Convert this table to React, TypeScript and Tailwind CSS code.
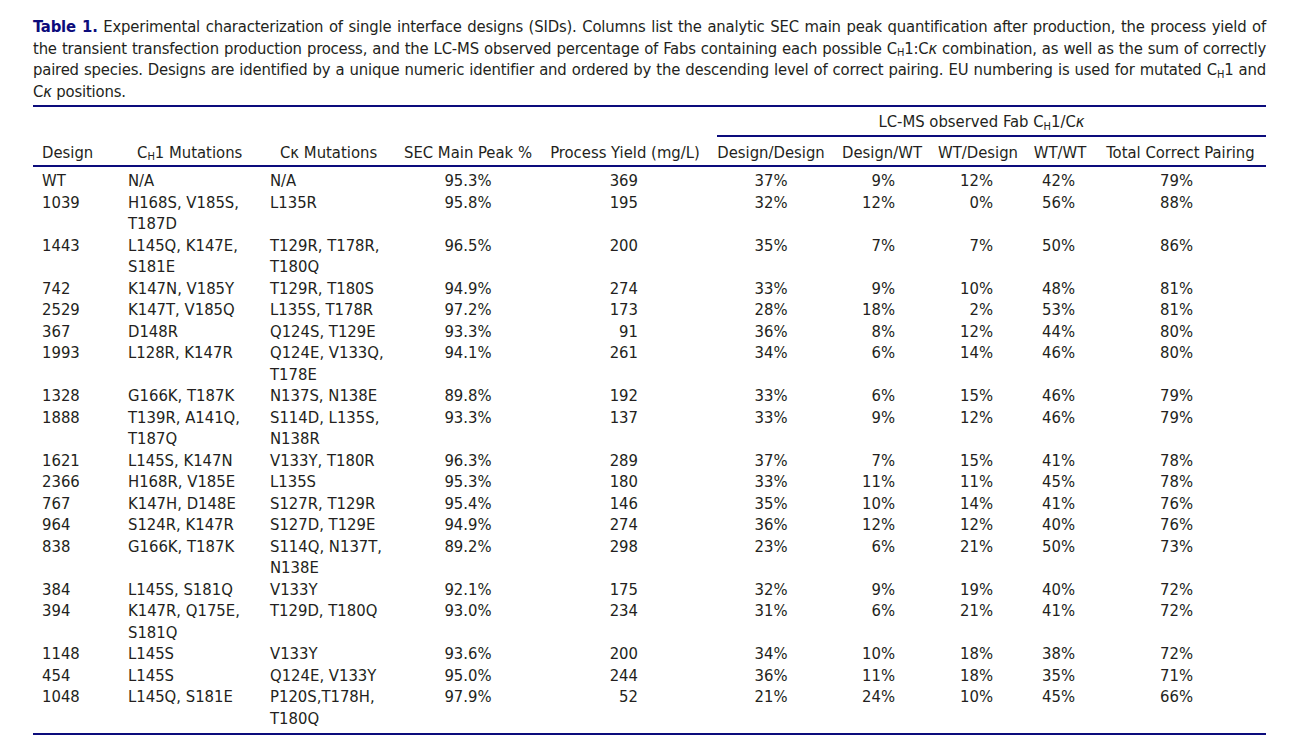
import React from "react";

type Row = {
  d: string;
  ch: string[];
  ck: string[];
  sec: string;
  y: string;
  dd: string;
  dw: string;
  wd: string;
  ww: string;
  t: string;
};

const rows: Row[] = [
  { d: "WT", ch: ["N/A"], ck: ["N/A"], sec: "95.3%", y: "369", dd: "37%", dw: "9%", wd: "12%", ww: "42%", t: "79%" },
  { d: "1039", ch: ["H168S, V185S,", "T187D"], ck: ["L135R"], sec: "95.8%", y: "195", dd: "32%", dw: "12%", wd: "0%", ww: "56%", t: "88%" },
  { d: "1443", ch: ["L145Q, K147E,", "S181E"], ck: ["T129R, T178R,", "T180Q"], sec: "96.5%", y: "200", dd: "35%", dw: "7%", wd: "7%", ww: "50%", t: "86%" },
  { d: "742", ch: ["K147N, V185Y"], ck: ["T129R, T180S"], sec: "94.9%", y: "274", dd: "33%", dw: "9%", wd: "10%", ww: "48%", t: "81%" },
  { d: "2529", ch: ["K147T, V185Q"], ck: ["L135S, T178R"], sec: "97.2%", y: "173", dd: "28%", dw: "18%", wd: "2%", ww: "53%", t: "81%" },
  { d: "367", ch: ["D148R"], ck: ["Q124S, T129E"], sec: "93.3%", y: "91", dd: "36%", dw: "8%", wd: "12%", ww: "44%", t: "80%" },
  { d: "1993", ch: ["L128R, K147R"], ck: ["Q124E, V133Q,", "T178E"], sec: "94.1%", y: "261", dd: "34%", dw: "6%", wd: "14%", ww: "46%", t: "80%" },
  { d: "1328", ch: ["G166K, T187K"], ck: ["N137S, N138E"], sec: "89.8%", y: "192", dd: "33%", dw: "6%", wd: "15%", ww: "46%", t: "79%" },
  { d: "1888", ch: ["T139R, A141Q,", "T187Q"], ck: ["S114D, L135S,", "N138R"], sec: "93.3%", y: "137", dd: "33%", dw: "9%", wd: "12%", ww: "46%", t: "79%" },
  { d: "1621", ch: ["L145S, K147N"], ck: ["V133Y, T180R"], sec: "96.3%", y: "289", dd: "37%", dw: "7%", wd: "15%", ww: "41%", t: "78%" },
  { d: "2366", ch: ["H168R, V185E"], ck: ["L135S"], sec: "95.3%", y: "180", dd: "33%", dw: "11%", wd: "11%", ww: "45%", t: "78%" },
  { d: "767", ch: ["K147H, D148E"], ck: ["S127R, T129R"], sec: "95.4%", y: "146", dd: "35%", dw: "10%", wd: "14%", ww: "41%", t: "76%" },
  { d: "964", ch: ["S124R, K147R"], ck: ["S127D, T129E"], sec: "94.9%", y: "274", dd: "36%", dw: "12%", wd: "12%", ww: "40%", t: "76%" },
  { d: "838", ch: ["G166K, T187K"], ck: ["S114Q, N137T,", "N138E"], sec: "89.2%", y: "298", dd: "23%", dw: "6%", wd: "21%", ww: "50%", t: "73%" },
  { d: "384", ch: ["L145S, S181Q"], ck: ["V133Y"], sec: "92.1%", y: "175", dd: "32%", dw: "9%", wd: "19%", ww: "40%", t: "72%" },
  { d: "394", ch: ["K147R, Q175E,", "S181Q"], ck: ["T129D, T180Q"], sec: "93.0%", y: "234", dd: "31%", dw: "6%", wd: "21%", ww: "41%", t: "72%" },
  { d: "1148", ch: ["L145S"], ck: ["V133Y"], sec: "93.6%", y: "200", dd: "34%", dw: "10%", wd: "18%", ww: "38%", t: "72%" },
  { d: "454", ch: ["L145S"], ck: ["Q124E, V133Y"], sec: "95.0%", y: "244", dd: "36%", dw: "11%", wd: "18%", ww: "35%", t: "71%" },
  { d: "1048", ch: ["L145Q, S181E"], ck: ["P120S,T178H,", "T180Q"], sec: "97.9%", y: "52", dd: "21%", dw: "24%", wd: "10%", ww: "45%", t: "66%" },
];

const GRID =
  "grid grid-cols-[95px_142px_125px_146px_168px_124px_98px_94px_70px_171px]";

const Sub = ({ children }: { children: React.ReactNode }) => (
  <sub className="text-[11px]">{children}</sub>
);

export default function App() {
  return (
    <div
      className="w-[1296px] h-[749px] bg-white text-[#231f20] text-[16.5px] leading-[21.5px] overflow-hidden"
      style={{ fontFamily: "'DejaVu Sans Condensed', 'Liberation Sans', sans-serif" }}
    >
      <div className="ml-[33px] w-[1233px] pt-[16px]">
        {/* Caption */}
        <div className="pb-[3px] border-b-2 border-[#0c0c7c] tracking-[-0.18px]">
          <div className="whitespace-nowrap text-justify [text-align-last:justify]">
            <span className="font-bold text-[#0c0c7c]">Table 1.</span> Experimental characterization of single interface designs (SIDs). Columns list the analytic SEC main peak quantification after production, the process yield of
          </div>
          <div className="whitespace-nowrap text-justify [text-align-last:justify]">
            the transient transfection production process, and the LC-MS observed percentage of Fabs containing each possible C<Sub>H</Sub>1:C<i>κ</i> combination, as well as the sum of correctly
          </div>
          <div className="whitespace-nowrap text-justify [text-align-last:justify]">
            paired species. Designs are identified by a unique numeric identifier and ordered by the descending level of correct pairing. EU numbering is used for mutated C<Sub>H</Sub>1 and
          </div>
          <div className="whitespace-nowrap">
            C<i>κ</i> positions.
          </div>
        </div>

        {/* Group header */}
        <div className={`${GRID} pt-[4px]`}>
          <div className="col-span-5" />
          <div className="col-span-5 ml-[8px] pr-[20px] pb-[2px] border-b-2 border-[#0c0c7c] text-center whitespace-nowrap">
            LC-MS observed Fab C<Sub>H</Sub>1/C<i>κ</i>
          </div>
        </div>

        {/* Column headers */}
        <div className={`${GRID} pt-[5px] pb-[2px] border-b-2 border-[#0c0c7c] whitespace-nowrap`}>
          <div className="pl-[9px]">Design</div>
          <div className="pl-[9px]">
            C<Sub>H</Sub>1 Mutations
          </div>
          <div className="pl-[10px]">Cκ Mutations</div>
          <div className="text-center">SEC Main Peak %</div>
          <div className="text-center">Process Yield (mg/L)</div>
          <div className="text-center">Design/Design</div>
          <div className="text-center">Design/WT</div>
          <div className="text-center">WT/Design</div>
          <div className="text-center">WT/WT</div>
          <div className="text-center">Total Correct Pairing</div>
        </div>

        {/* Body */}
        <div className="pt-[3px] pb-[4px] border-b-2 border-[#0c0c7c]">
          {rows.map((r) => (
            <div key={r.d} className={`${GRID} whitespace-nowrap`}>
              <div className="pl-[9px]">{r.d}</div>
              <div>
                {r.ch.map((l) => (
                  <div key={l}>{l}</div>
                ))}
              </div>
              <div>
                {r.ck.map((l) => (
                  <div key={l}>{l}</div>
                ))}
              </div>
              <div className="text-center">{r.sec}</div>
              <div className="text-right pr-[71px]">{r.y}</div>
              <div className="text-center">{r.dd}</div>
              <div className="text-right pr-[36px]">{r.dw}</div>
              <div className="text-right pr-[32px]">{r.wd}</div>
              <div className="text-right pr-[20px]">{r.ww}</div>
              <div className="text-right pr-[73px]">{r.t}</div>
            </div>
          ))}
        </div>
      </div>
    </div>
  );
}
